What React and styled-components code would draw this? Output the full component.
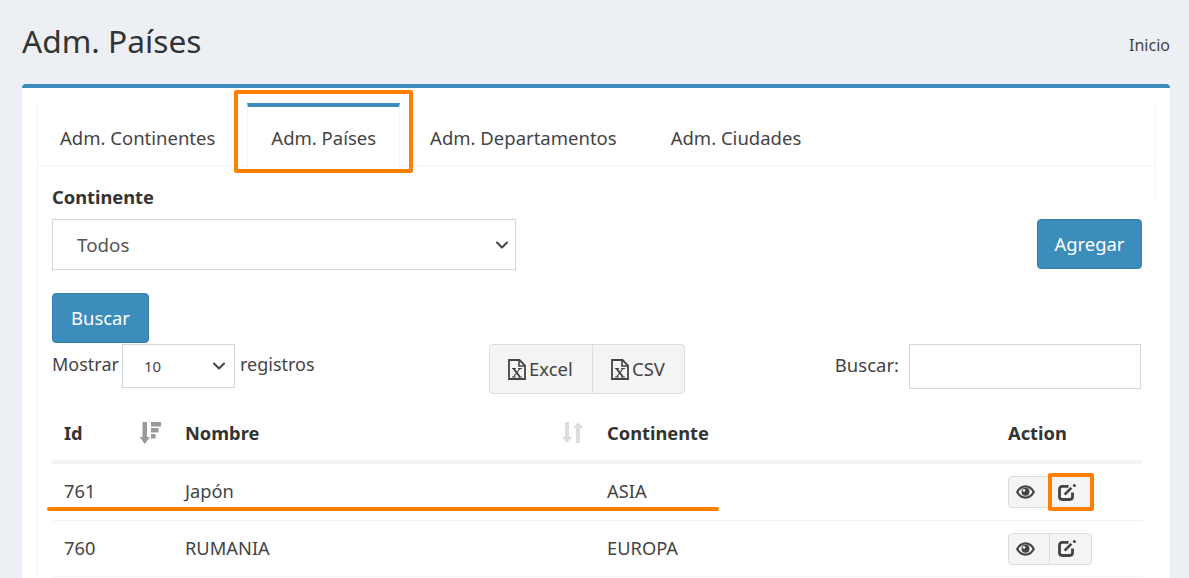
import React from "react";
import styled, { createGlobalStyle } from "styled-components";
import { LuChevronDown } from "react-icons/lu";

const GlobalStyle = createGlobalStyle`
  html, body {
    margin: 0;
    padding: 0;
    height: 578px;
    overflow: hidden;
    background: #ecf0f5;
  }
  body {
    font-family: "Noto Sans", "Open Sans", sans-serif;
    color: #333;
  }
  * {
    box-sizing: border-box;
  }
`;

const FileIcon = () => (
  <svg width="18" height="21" viewBox="0 0 18 21" fill="none">
    <path d="M1 1h10.5L17 6.5V20H1z" stroke="#444" strokeWidth="1.8" />
    <path d="M11 1v6h6" stroke="#444" strokeWidth="1.6" />
    <path d="M5.5 9.5l6.5 8.5" stroke="#444" strokeWidth="2" />
    <path d="M12 9.5l-6.5 8.5" stroke="#444" strokeWidth="1.2" />
    <path d="M4 9.5h4M10 9.5h4M4 18h4M10 18h4" stroke="#444" strokeWidth="1" />
  </svg>
);

const EyeIcon = () => (
  <svg width="19" height="14" viewBox="0 0 19 14">
    <path d="M1.2 7C3.2 3.4 6 1.4 9.5 1.4S15.8 3.4 17.8 7c-2 3.6-4.8 5.6-8.3 5.6S3.2 10.6 1.2 7z" fill="none" stroke="#444" strokeWidth="2.2" />
    <circle cx="9.5" cy="6.8" r="4" fill="#444" />
    <circle cx="8" cy="5.4" r="1.3" fill="#f4f4f4" />
  </svg>
);

const EditIcon = () => (
  <svg width="18" height="17" viewBox="0 0 18 17" fill="none">
    <path d="M10.5 2.4H4.2A2.7 2.7 0 0 0 1.5 5.1v7.7a2.7 2.7 0 0 0 2.7 2.7h7.6a2.7 2.7 0 0 0 2.7-2.7V8.5" stroke="#444" strokeWidth="2.8" />
    <path d="M6.6 10.6l6.8-6.8" stroke="#444" strokeWidth="2.6" />
    <circle cx="16.4" cy="1.6" r="1.5" fill="#444" />
  </svg>
);

const SortedIcon = () => (
  <svg width="22" height="22" viewBox="0 0 22 22" fill="#999">
    <path d="M3.5 0h4.5v15h3l-5.2 7L.6 15h2.9z" />
    <path d="M12 0h10v4.5H12zM12 6h7.5v4.5H12zM12 12h4.5v4.5H12z" />
  </svg>
);

const UnsortedIcon = () => (
  <svg width="21" height="21" viewBox="0 0 21 21" fill="#ddd">
    <path d="M3 0h4v15h3l-5 6-5-6h3z" />
    <path d="M14 21h4V6h3l-5-6-5 6h3z" />
  </svg>
);

const ActionButtons = ({ marked }) => (
  <ActionGroup>
    <ActionButton $width={40} $pad={7}>
      <EyeIcon />
    </ActionButton>
    <ActionButton $width={42} $pad={8}>
      <EditIcon />
      {marked && <EditMark />}
    </ActionButton>
  </ActionGroup>
);

const App = () => {
  return (
    <Page>
      <GlobalStyle />
      <Header>
        <Title>Adm. Países</Title>
        <Crumb>Inicio</Crumb>
      </Header>

      <Card>
        <TabBox>
          <Tabs>
            <FirstTab>Adm. Continentes</FirstTab>
            <ActiveTab>
              Adm. Países
              <TabMark />
            </ActiveTab>
            <Tab>Adm. Departamentos</Tab>
            <Tab>Adm. Ciudades</Tab>
          </Tabs>

          <Pane>
            <FilterRow>
              <div>
                <Label>Continente</Label>
                <FakeSelect>
                  Todos
                  <LuChevronDown />
                </FakeSelect>
              </div>
              <AddButton>Agregar</AddButton>
            </FilterRow>

            <SearchButton>Buscar</SearchButton>

            <ToolRow>
              <LengthControl>
                Mostrar
                <SmallSelect>
                  10
                  <LuChevronDown />
                </SmallSelect>
                registros
              </LengthControl>

              <ExportGroup>
                <ExportButton $width={102} $pad={18}>
                  <FileIcon />
                  Excel
                </ExportButton>
                <ExportButton $width={92} $pad={18}>
                  <FileIcon />
                  CSV
                </ExportButton>
              </ExportGroup>

              <SearchControl>
                Buscar:
                <SearchInput />
              </SearchControl>
            </ToolRow>

            <Table>
              <colgroup>
                <col width="121" />
                <col width="422" />
                <col width="401" />
                <col width="146" />
              </colgroup>
              <thead>
                <tr>
                  <HeadCell>
                    Id
                    <SortIcon>
                      <SortedIcon />
                    </SortIcon>
                  </HeadCell>
                  <HeadCell>
                    Nombre
                    <SortIcon>
                      <UnsortedIcon />
                    </SortIcon>
                  </HeadCell>
                  <HeadCell>Continente</HeadCell>
                  <HeadCell>Action</HeadCell>
                </tr>
              </thead>
              <tbody>
                <tr>
                  <Cell>761</Cell>
                  <Cell>
                    Japón
                    <RowMark />
                  </Cell>
                  <Cell>ASIA</Cell>
                  <ActionCell>
                    <ActionButtons marked />
                  </ActionCell>
                </tr>
                <tr>
                  <Cell>760</Cell>
                  <Cell>RUMANIA</Cell>
                  <Cell>EUROPA</Cell>
                  <ActionCell>
                    <ActionButtons />
                  </ActionCell>
                </tr>
              </tbody>
            </Table>
          </Pane>
        </TabBox>
      </Card>
    </Page>
  );
};

export default App;

const Page = styled.div`
  width: 1189px;
  height: 578px;
  overflow: hidden;
  padding: 0 19px 0 22px;
`;

const Header = styled.div`
  height: 84px;
  display: flex;
  justify-content: space-between;
  align-items: center;
`;

const Title = styled.h1`
  margin: 0 0 2px;
  font-size: 31.7px;
  font-weight: 400;
  line-height: 82px;
  color: #333;
`;

const Crumb = styled.div`
  font-size: 16px;
  color: #444;
  margin-top: 6px;
`;

const Card = styled.div`
  background: #fff;
  border-top: 4px solid #3c8dbc;
  border-radius: 4px 4px 0 0;
  padding: 15px 14px 0 15px;
  height: 600px;
`;

const TabBox = styled.div`
  position: relative;
  border-left: 1px solid #f4f4f4;

  &::after {
    content: "";
    position: absolute;
    top: 0;
    right: 0;
    width: 1px;
    height: 97px;
    background: #f4f4f4;
  }
`;

const Tabs = styled.div`
  display: flex;
  height: 63px;
  border-bottom: 1px solid #f4f4f4;
`;

const Tab = styled.div`
  display: flex;
  align-items: center;
  font-size: 18.5px;
  color: #444;
  padding: 7px 24px 0;
  margin-right: 6px;
`;

const FirstTab = styled(Tab)`
  margin-left: -2px;
  margin-right: 8px;
`;

const ActiveTab = styled.div`
  position: relative;
  display: flex;
  align-items: center;
  height: 64px;
  padding: 1px 23px 0;
  margin-right: 6px;
  font-size: 18.5px;
  color: #444;
  background: #fff;
  border-top: 4px solid #3c8dbc;
  border-left: 1px solid #f4f4f4;
  border-right: 1px solid #f4f4f4;
`;

const TabMark = styled.span`
  position: absolute;
  left: -14px;
  top: -17px;
  width: 179px;
  height: 83px;
  border: 4px solid #ff8000;
  border-radius: 2px;
`;

const Pane = styled.div`
  padding: 19px 15px 0 14px;
`;

const FilterRow = styled.div`
  display: flex;
  justify-content: space-between;
  align-items: flex-end;
`;

const Label = styled.div`
  font-size: 18.3px;
  font-weight: 700;
  line-height: 24px;
  margin-bottom: 10px;
`;

const FakeSelect = styled.div`
  width: 464px;
  height: 51px;
  border: 1px solid #d2d6de;
  display: flex;
  align-items: center;
  justify-content: space-between;
  padding: 0 3px 0 24px;
  font-size: 18.8px;
  color: #555;

  svg {
    width: 20px;
    height: 20px;
    color: #444;
    stroke-width: 2.4;
  }
`;

const PrimaryButton = styled.div`
  height: 50px;
  padding-bottom: 2px;
  background: #3c8dbc;
  border: 1px solid #367fa9;
  border-radius: 4px;
  color: #fff;
  font-size: 18.4px;
  display: flex;
  align-items: center;
  justify-content: center;
`;

const AddButton = styled(PrimaryButton)`
  width: 105px;
  margin: 0 -1px 1px 0;
`;

const SearchButton = styled(PrimaryButton)`
  width: 97px;
  margin-top: 23px;
`;

const ToolRow = styled.div`
  display: grid;
  grid-template-columns: 437px 196px 1fr;
  align-items: start;
  margin-top: 1px;
  height: 63px;
`;

const LengthControl = styled.div`
  display: flex;
  align-items: flex-start;
  font-size: 18px;
  line-height: 40px;
  color: #444;
`;

const SmallSelect = styled.div`
  width: 113px;
  height: 44px;
  margin: 0 5px 0 3px;
  border: 1px solid #d2d6de;
  display: flex;
  align-items: center;
  justify-content: space-between;
  padding: 0 5px 0 21px;
  font-size: 15px;
  color: #444;

  svg {
    width: 20px;
    height: 20px;
    stroke-width: 2.4;
  }
`;

const ExportGroup = styled.div`
  display: flex;
  height: 50px;
  background: #f4f4f4;
  border: 1px solid #ddd;
  border-radius: 4px;
`;

const ExportButton = styled.div`
  width: ${(p) => p.$width}px;
  display: flex;
  align-items: center;
  padding: 0 0 2px ${(p) => p.$pad}px;
  gap: 3px;
  font-size: 18.5px;
  color: #444;

  & + & {
    border-left: 1px solid #ddd;
  }

  svg {
    margin-top: 2px;
  }
`;

const SearchControl = styled.div`
  display: flex;
  justify-content: flex-end;
  align-items: flex-start;
  gap: 10px;
  font-size: 18.5px;
  line-height: 42px;
  color: #444;
`;

const SearchInput = styled.div`
  width: 232px;
  height: 45px;
  border: 1px solid #d2d6de;
`;

const Table = styled.table`
  width: 1090px;
  table-layout: fixed;
  border-collapse: collapse;
`;

const HeadCell = styled.th`
  position: relative;
  height: 55px;
  padding: 0 12px 2px;
  text-align: left;
  font-size: 18.3px;
  font-weight: 700;
  border-bottom: 4px solid #f4f4f4;
`;

const SortIcon = styled.span`
  position: absolute;
  right: 12px;
  top: 15px;
  display: flex;
`;

const Cell = styled.td`
  position: relative;
  height: 58px;
  padding: 0 12px 2px;
  font-size: 18.3px;
  color: #444;
  border-bottom: 1px solid #f4f4f4;

  tr:last-child & {
    height: 56px;
  }
`;

const ActionCell = styled(Cell)`
  padding: 1px 12px 0;
`;

const RowMark = styled.span`
  position: absolute;
  left: -126px;
  top: 43px;
  width: 672px;
  height: 4px;
  background: #ff8000;
  border-radius: 2px;
`;

const ActionGroup = styled.div`
  display: inline-flex;
  height: 32px;
  background: #f4f4f4;
  border: 1px solid #ddd;
  border-radius: 4px;
  vertical-align: middle;
`;

const ActionButton = styled.div`
  position: relative;
  width: ${(p) => p.$width}px;
  display: flex;
  align-items: center;
  padding-left: ${(p) => p.$pad}px;

  & + & {
    border-left: 1px solid #ddd;
  }
`;

const EditMark = styled.span`
  position: absolute;
  left: -2px;
  top: -4px;
  width: 46px;
  height: 38px;
  border: 4px solid #ff8000;
  border-radius: 2px;
`;
